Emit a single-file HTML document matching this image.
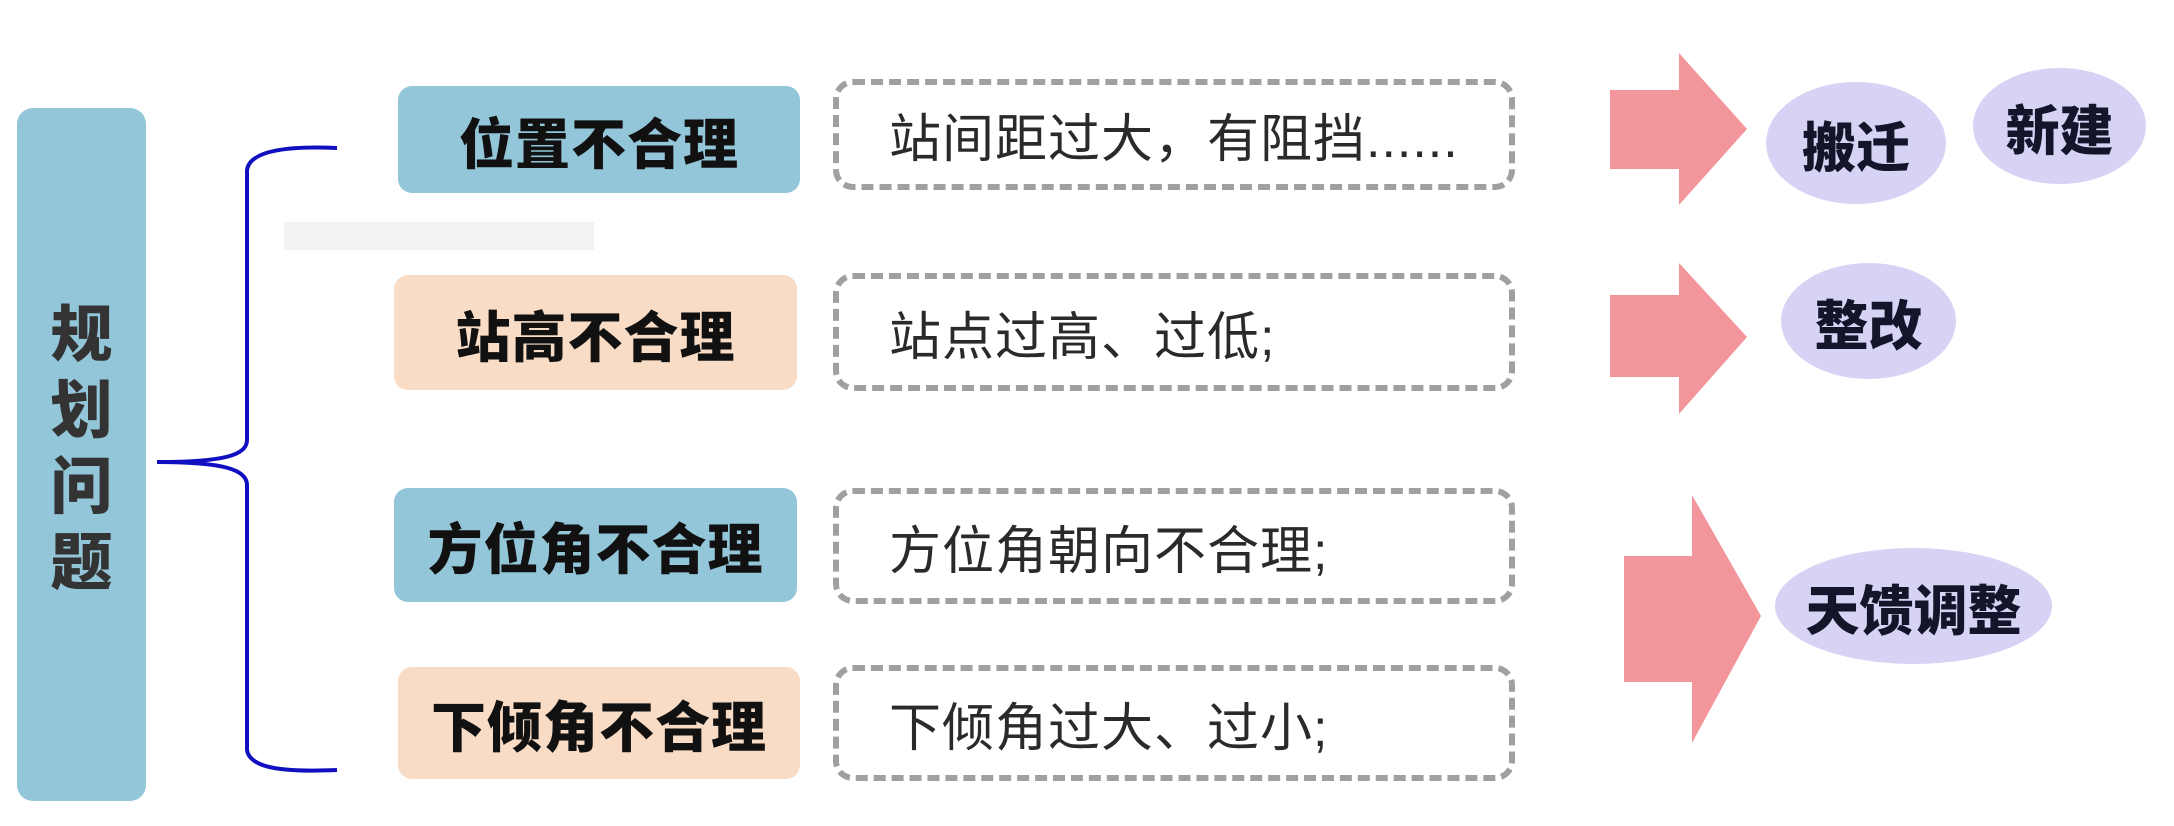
<!DOCTYPE html>
<html><head><meta charset="utf-8"><style>
*{margin:0;padding:0;box-sizing:border-box}
body{width:2174px;height:826px;background:#fff;position:relative;overflow:hidden;font-family:"Liberation Sans","Noto Sans CJK SC",sans-serif}
.a{position:absolute}
.cat{position:absolute;border-radius:14px;display:flex;align-items:center;justify-content:center;font-weight:900;font-size:55px;color:#111;letter-spacing:1px}
.b{background:#93c6d9}.p{background:#f9dcc5}
.d{position:absolute;border:6px dashed #a0a0a0;border-radius:20px;display:flex;align-items:center;padding-left:50px;font-size:52px;color:#2a2a2a;letter-spacing:1px}
.e{position:absolute;background:#d6d3f4;border-radius:50%;display:flex;align-items:center;justify-content:center;font-weight:900;font-size:54px;color:#14142a}
</style></head><body>
<div class="a" style="left:17px;top:108px;width:129px;height:693px;background:#93c6d9;border-radius:16px"></div>
<div class="a" style="left:17px;top:298px;width:129px;text-align:center;font-weight:900;font-size:62px;line-height:76px;color:#333">规<br>划<br>问<br>题</div>
<div class="a" style="left:284px;top:222px;width:310px;height:28px;background:#f3f3f3"></div>
<svg class="a" style="left:0;top:0" width="2174" height="826">
<path d="M337 148 C290 146 250 150 247 170 L247 440 C247 455 225 462 157 462 C225 462 247 470 247 485 L247 750 C250 770 290 772 337 770" fill="none" stroke="#1010c0" stroke-width="4"/>
<polygon points="1610,90 1679,90 1679,53 1747,129 1679,205 1679,169 1610,169" fill="#f3969b"/>
<polygon points="1610,295 1679,295 1679,263 1747,337 1679,414 1679,377 1610,377" fill="#f3969b"/>
<polygon points="1624,556 1692,556 1692,495 1761,616 1692,743 1692,682 1624,682" fill="#f3969b"/>
</svg>
<div class="cat b" style="left:398px;top:86px;width:402px;height:107px">位置不合理</div>
<div class="cat p" style="left:394px;top:275px;width:403px;height:115px">站高不合理</div>
<div class="cat b" style="left:394px;top:488px;width:403px;height:114px">方位角不合理</div>
<div class="cat p" style="left:398px;top:667px;width:402px;height:112px">下倾角不合理</div>
<div class="d" style="left:833px;top:79px;width:682px;height:111px">站间距过大，有阻挡......</div>
<div class="d" style="left:833px;top:273px;width:682px;height:118px">站点过高、过低;</div>
<div class="d" style="left:833px;top:488px;width:682px;height:116px">方位角朝向不合理;</div>
<div class="d" style="left:833px;top:665px;width:682px;height:116px">下倾角过大、过小;</div>
<div class="e" style="left:1766px;top:82px;width:180px;height:122px">搬迁</div>
<div class="e" style="left:1973px;top:68px;width:173px;height:116px">新建</div>
<div class="e" style="left:1781px;top:263px;width:175px;height:116px">整改</div>
<div class="e" style="left:1775px;top:548px;width:277px;height:116px">天馈调整</div>
</body></html>
